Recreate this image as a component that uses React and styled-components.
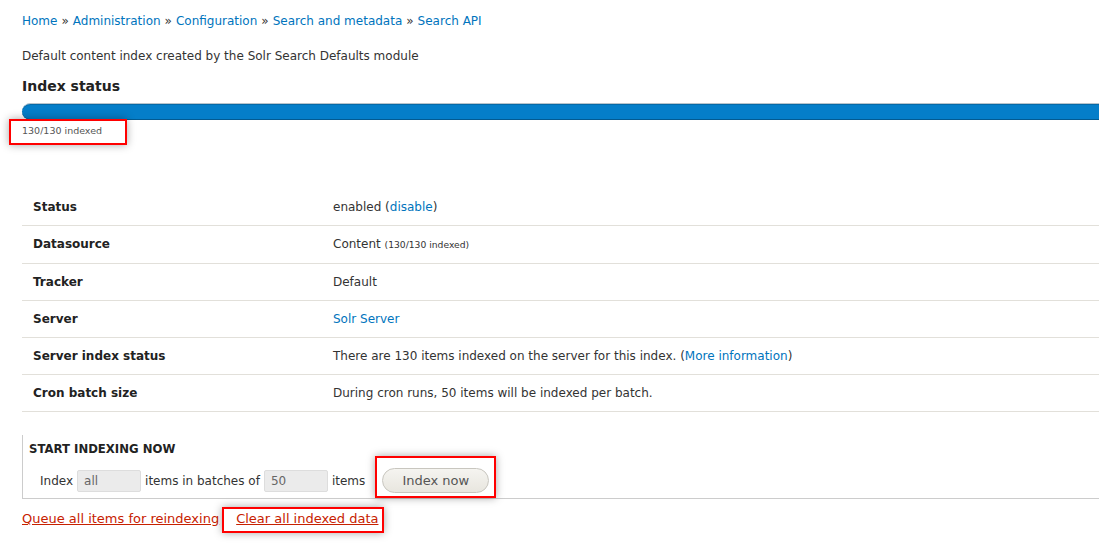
import React from 'react';
import styled, { createGlobalStyle } from 'styled-components';

const GlobalStyle = createGlobalStyle`
  html {
    overflow: hidden;
  }
  html, body {
    margin: 0;
    padding: 0;
    background: #fff;
  }
  body {
    font-family: "DejaVu Sans", "Liberation Sans", sans-serif;
    font-size: 12px;
    color: #333;
  }
`;

const Page = styled.div`
  width: 1140px;
  min-height: 553px;
  padding: 13px 0 0 22px;
`;

const Breadcrumb = styled.nav`
  line-height: 16px;
  a {
    color: #0074bd;
    text-decoration: none;
  }
`;

const Sep = styled.span`
  margin: 0 4px;
`;

const Description = styled.p`
  margin: 19px 0 0;
  line-height: 16px;
`;

const Heading = styled.h2`
  margin: 12px 0 0;
  font-size: 14px;
  line-height: 20px;
  font-weight: bold;
  color: #222;
`;

const Annotated = styled.span`
  position: relative;
  display: inline-block;
  &::after {
    content: '';
    position: absolute;
    top: ${p => p.$t}px;
    right: ${p => p.$r}px;
    bottom: ${p => p.$b}px;
    left: ${p => p.$l}px;
    border: 2px solid #f00;
    box-shadow: 0 0 8px rgba(0, 0, 0, 0.35);
    pointer-events: none;
  }
`;

const ButtonSlot = styled(Annotated)`
  margin-left: 13px;
`;

const ProgressTrack = styled.div`
  margin-top: 7px;
  height: 17px;
  border-radius: 9px 0 0 9px;
  background: #057ec9;
  border-top: 1px solid #b8c4cc;
  border-bottom: 1px solid #035a91;
  box-sizing: border-box;
  box-shadow: inset 0 1px 0 #066aa8;
`;

const ProgressLabel = styled.div`
  margin-top: 4px;
  font-size: 9.5px;
  line-height: 14px;
  color: #555;
`;

const InfoTable = styled.div`
  margin-top: 51px;
  display: grid;
  grid-template-columns: 300px 1fr;
`;

const Cell = styled.div`
  padding: 8px 11px;
  line-height: 20px;
  border-bottom: 1px solid #e2e0da;
  font-weight: ${p => (p.$label ? 'bold' : 'normal')};
  color: ${p => (p.$label ? '#222' : '#333')};
  a {
    color: #0074bd;
    text-decoration: none;
  }
`;

const Small = styled.small`
  font-size: 9.2px;
`;

const Fieldset = styled.fieldset`
  margin: 23px 0 0;
  padding: 6px 0 5px 6px;
  border: 0;
  border-left: 1px solid #ccc;
  border-bottom: 1px solid #ccc;
  min-width: 0;
`;

const Legend = styled.div`
  font-size: 11.7px;
  font-weight: bold;
  text-transform: uppercase;
  color: #222;
  line-height: 16px;
`;

const FormRow = styled.div`
  display: flex;
  align-items: center;
  margin-top: 11px;
  padding-left: 11px;
  gap: 4px;
`;

const TextInput = styled.input`
  width: 64px;
  height: 22px;
  box-sizing: border-box;
  border: 1px solid #ddd;
  border-radius: 2px;
  background: #ebebeb;
  color: #666;
  font-family: inherit;
  font-size: 12px;
  padding: 0 6px;
  margin: 0;
`;

const Button = styled.button`
  width: 107px;
  height: 25px;
  box-sizing: border-box;
  border: 1px solid #c8c6bf;
  border-radius: 20px;
  background: linear-gradient(#f5f4f0, #e8e6df);
  color: #555;
  font-family: inherit;
  font-size: 13px;
  padding: 0;
  cursor: pointer;
`;

const Actions = styled.div`
  display: flex;
  align-items: center;
  gap: 17px;
  margin-top: 12px;
  font-size: 13px;
  line-height: 16px;
`;

const DangerLink = styled.a`
  color: #c72100;
  text-decoration: underline;
`;

const rows = [
  ['Status', <>enabled (<a href="#">disable</a>)</>],
  ['Datasource', <>Content <Small>(130/130 indexed)</Small></>],
  ['Tracker', 'Default'],
  ['Server', <a href="#">Solr Server</a>],
  ['Server index status', <>There are 130 items indexed on the server for this index. (<a href="#">More information</a>)</>],
  ['Cron batch size', 'During cron runs, 50 items will be indexed per batch.'],
];

const crumbs = ['Home', 'Administration', 'Configuration', 'Search and metadata', 'Search API'];

export default function App() {
  return (
    <>
      <GlobalStyle />
      <Page>
        <Breadcrumb>
          {crumbs.map((c, i) => (
            <React.Fragment key={c}>
              {i > 0 && <Sep>»</Sep>}
              <a href="#">{c}</a>
            </React.Fragment>
          ))}
        </Breadcrumb>
        <Description>Default content index created by the Solr Search Defaults module</Description>
        <Heading>Index status</Heading>
        <ProgressTrack />
        <ProgressLabel>
          <Annotated $t={-5} $r={-25} $b={-7} $l={-13}>130/130 indexed</Annotated>
        </ProgressLabel>
        <InfoTable>
          {rows.map(([label, value]) => (
            <React.Fragment key={label}>
              <Cell $label>{label}</Cell>
              <Cell>{value}</Cell>
            </React.Fragment>
          ))}
        </InfoTable>
        <Fieldset>
          <Legend>Start indexing now</Legend>
          <FormRow>
            <span>Index</span>
            <TextInput defaultValue="all" />
            <span>items in batches of</span>
            <TextInput defaultValue="50" />
            <span>items</span>
            <ButtonSlot $t={-12} $r={-7} $b={-5} $l={-7}>
              <Button>Index now</Button>
            </ButtonSlot>
          </FormRow>
        </Fieldset>
        <Actions>
          <DangerLink href="#">Queue all items for reindexing</DangerLink>
          <Annotated $t={-4} $r={-6} $b={-6} $l={-14}>
            <DangerLink href="#">Clear all indexed data</DangerLink>
          </Annotated>
        </Actions>
      </Page>
    </>
  );
}
